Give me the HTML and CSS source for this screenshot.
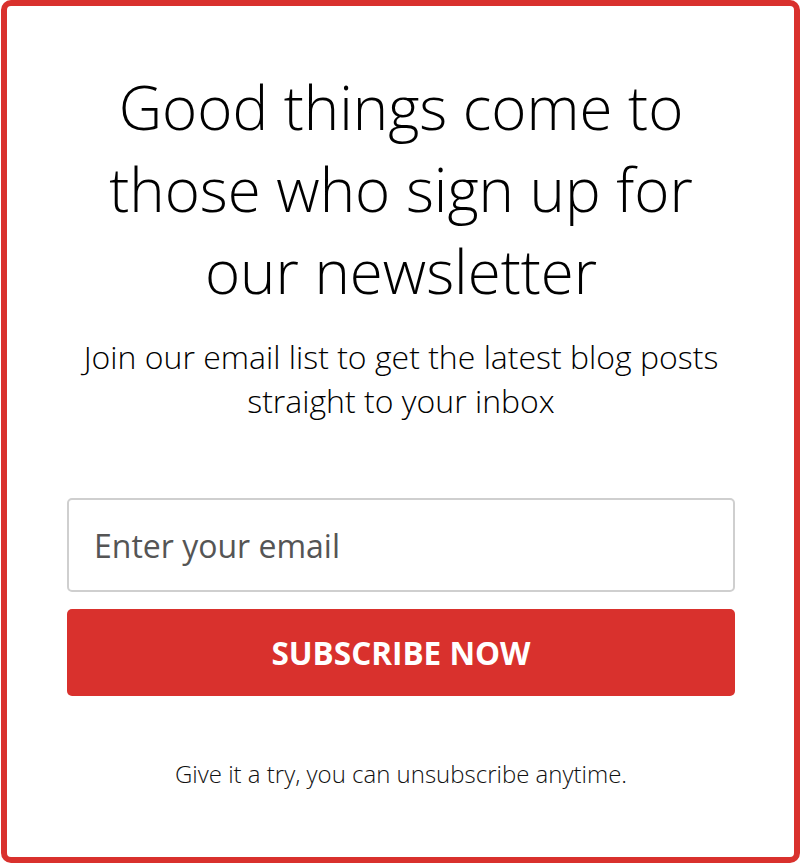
FILE: index.html
```html
<!DOCTYPE html>
<html lang="en">
<head>
<meta charset="utf-8">
<title>Newsletter</title>
<link rel="stylesheet" href="styles.css">
</head>
<body>
<div class="card">
  <h1 class="title">Good things come to those who sign up for our newsletter</h1>
  <p class="lead">Join our email list to get the latest blog posts straight to your inbox</p>
  <form class="form">
    <input class="email" type="email" placeholder="Enter your email">
    <button class="btn" type="button">SUBSCRIBE NOW</button>
  </form>
  <p class="note">Give it a try, you can unsubscribe anytime.</p>
</div>
</body>
</html>
```
FILE: styles.css
```css
html, body {
  margin: 0;
  padding: 0;
  background: #fff;
}
body {
  font-family: "Open Sans", "Liberation Sans", sans-serif;
  color: #000;
}
.card {
  box-sizing: border-box;
  margin-left: 1px;
  width: 799px;
  height: 863px;
  border: 6px solid #d9312d;
  border-radius: 10px;
  padding: 60px 59px 0 60px;
  text-align: center;
}
.title {
  margin: 0 20px;
  font-size: 60px;
  line-height: 82px;
  font-weight: 300;
}
.lead {
  margin: 23px 0 0;
  font-size: 32px;
  line-height: 44px;
  font-weight: 300;
}
.form {
  margin-top: 75px;
  display: flex;
  flex-direction: column;
  gap: 17px;
}
.email {
  box-sizing: border-box;
  height: 94px;
  width: 100%;
  border: 2px solid #cfcfcf;
  border-radius: 5px;
  padding: 0 25px;
  font-family: inherit;
  font-size: 32px;
  color: #333;
  outline: none;
}
.email::placeholder {
  color: #555;
  opacity: 1;
}
.btn {
  height: 87px;
  width: 100%;
  border: 0;
  border-radius: 5px;
  background: #d9312d;
  color: #fff;
  font-family: inherit;
  font-size: 31.5px;
  font-weight: 700;
}
.note {
  margin: 64px 0 0;
  font-size: 24px;
  line-height: 28px;
  font-weight: 300;
  color: #111;
}
```
